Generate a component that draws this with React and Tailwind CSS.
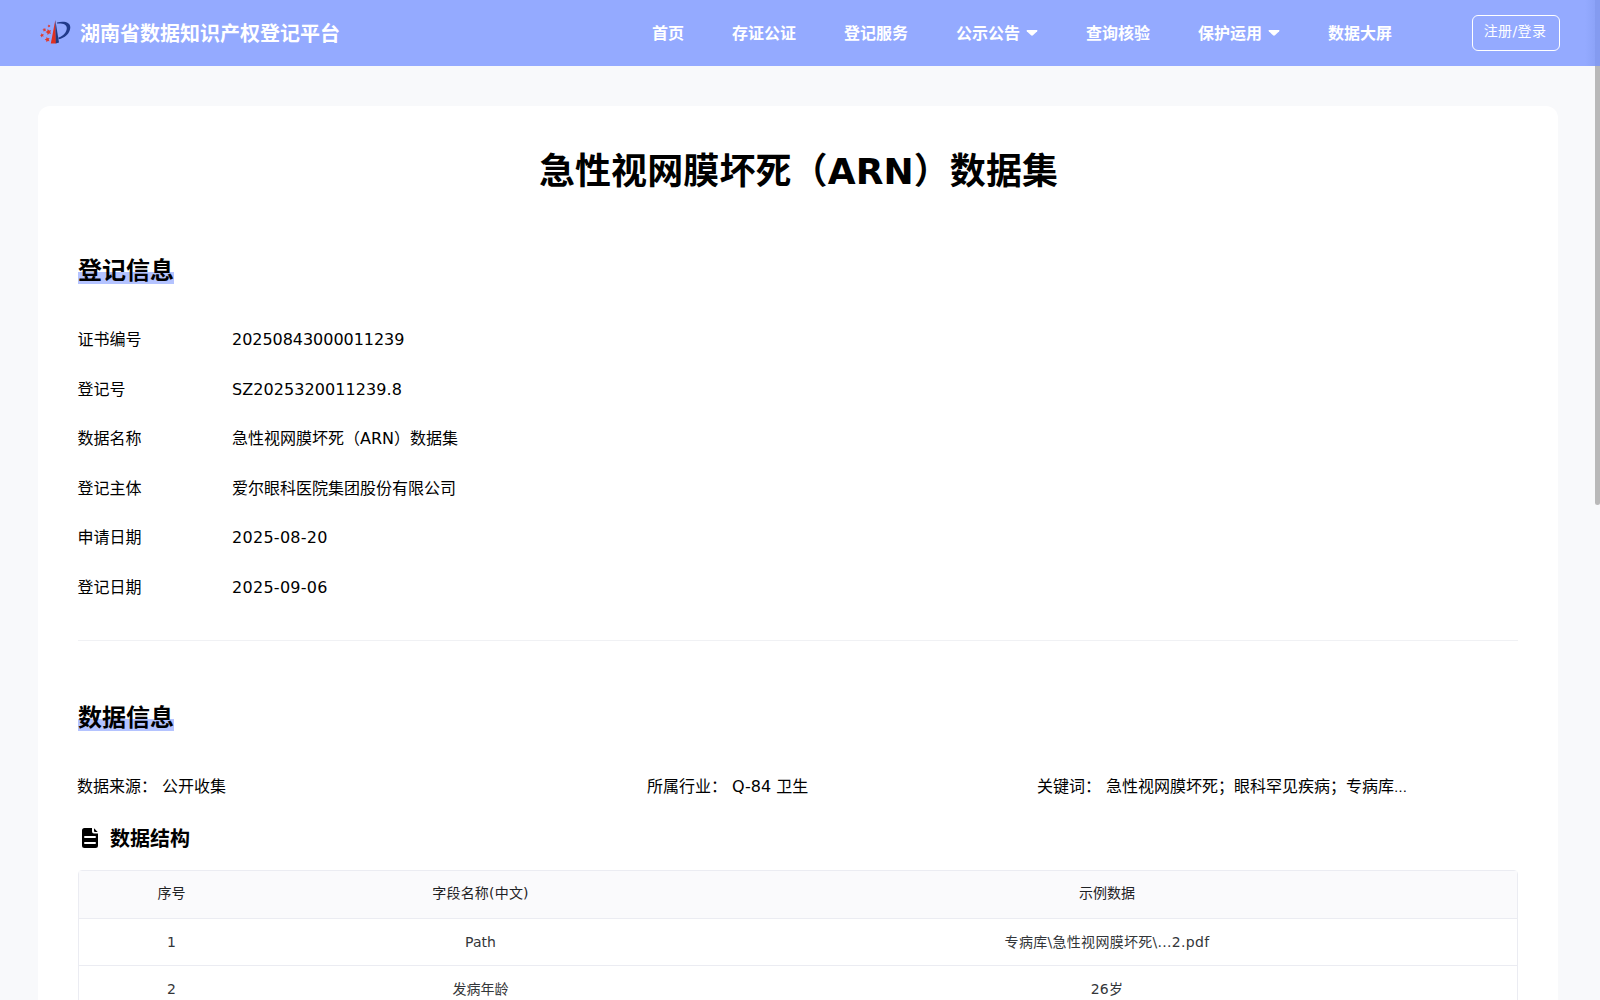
const NAV = [
  { label: "首页" },
  { label: "存证公证" },
  { label: "登记服务" },
  { label: "公示公告", menu: true },
  { label: "查询核验" },
  { label: "保护运用", menu: true },
  { label: "数据大屏" },
];

const INFO = [
  ["证书编号", "20250843000011239", "tracking-[-0.04px]"],
  ["登记号", "SZ2025320011239.8", "tracking-[0.07px]"],
  ["数据名称", "急性视网膜坏死（ARN）数据集", ""],
  ["登记主体", "爱尔眼科医院集团股份有限公司", ""],
  ["申请日期", "2025-08-20", "tracking-[0.28px]"],
  ["登记日期", "2025-09-06", "tracking-[0.28px]"],
];

const ROWS = [
  ["1", "Path", "专病库\\急性视网膜坏死\\...2.pdf"],
  ["2", "发病年龄", "26岁"],
];

function Star({ x, y, r }) {
  const pts = Array.from({ length: 10 }, (_, i) => {
    const a = (Math.PI / 5) * i - Math.PI / 2 - 0.3;
    const d = i % 2 ? r * 0.5 : r;
    return `${x + d * Math.cos(a)},${y + d * Math.sin(a)}`;
  });
  return <polygon points={pts.join(" ")} fill="#e03a2e" />;
}

function Logo() {
  return (
    <svg width="32" height="24" viewBox="0 0 32 24" className="-mt-0.5 shrink-0">
      <path d="M15.3 0 L16 23.5 H10.8 Z" fill="#df3020" />
      <path d="M15.3 0 L19 22.6 L15.8 23.5 Z" fill="#213a82" />
      <path
        d="M17 2.6 C24 0.6 30.6 2.3 30.3 7.8 C30 13.5 24.5 18.3 18.6 19.3 L18.4 17.6 C23.3 16 26.8 12.3 26.8 8 C26.8 4.4 22.8 3.2 17 3.6 Z"
        fill="#213a8a"
      />
      <Star x={9} y={6} r={1.6} />
      <Star x={4.4} y={9.8} r={2} />
      <Star x={8.6} y={12} r={3.1} />
      <Star x={2} y={15.3} r={2.2} />
      <Star x={7.4} y={19.6} r={2.7} />
    </svg>
  );
}

function Caret() {
  return (
    <svg width="12" height="8" viewBox="0 0 12 8" className="-mt-0.5">
      <path d="M1.2 1 H10.8 Q12 1.2 11.2 2.3 L7 6.3 Q6 7.1 5 6.3 L0.8 2.3 Q0 1.2 1.2 1 Z" fill="#fff" />
    </svg>
  );
}

function DocIcon() {
  return (
    <svg width="16" height="20" viewBox="0 0 16 20">
      <path d="M2.5 0 H10 V3.5 Q10 5.5 12 5.5 H16 V17.5 Q16 20 13.5 20 H2.5 Q0 20 0 17.5 V2.5 Q0 0 2.5 0 Z" fill="#000" />
      <path d="M12 0.3 L15.7 4 H13 Q12 4 12 3 Z" fill="#000" />
      <path d="M3 9 H13 M3 15 H13" stroke="#fff" strokeWidth="2" strokeLinecap="round" />
    </svg>
  );
}

function SectionTitle({ children }) {
  return (
    <h2 className="h-7 w-24 bg-[linear-gradient(#b4c3ff,#b4c3ff)] bg-[length:100%_12px] bg-bottom bg-no-repeat text-2xl/[30px] font-bold">
      {children}
    </h2>
  );
}

export default function App() {
  return (
    <div className="relative flex h-[1000px] w-[1600px] flex-col overflow-hidden bg-[#f8f9fb] font-['DejaVu_Sans','Noto_Sans_CJK_SC',sans-serif] text-black">
      <header className="flex h-[66px] shrink-0 items-center bg-[#94aaff] pr-10 pl-10 text-white">
        <Logo />
        <span className="ml-2 w-[572px] pb-px font-['Noto_Sans_CJK_SC',sans-serif] text-xl font-bold">
          湖南省数据知识产权登记平台
        </span>
        <nav className="flex gap-12 pt-0.5 text-base font-bold">
          {NAV.map((n) => (
            <a key={n.label} className="flex items-center gap-1.5 whitespace-nowrap">
              {n.label}
              {n.menu && <Caret />}
            </a>
          ))}
        </nav>
        <button className="ml-auto h-9 w-[88px] rounded-md border border-white pr-0.5 pb-1 text-sm tracking-[0.4px] whitespace-nowrap">
          注册/登录
        </button>
      </header>

      <main className="mt-10 mr-[42px] ml-[38px] flex-1 rounded-t-xl bg-white px-10 pt-10">
        <h1 className="h-[52px] pl-px text-center text-4xl/[52px] font-bold tracking-[0.1px]">
          急性视网膜坏死（ARN）数据集
        </h1>

        <div className="mt-[58px]">
          <SectionTitle>登记信息</SectionTitle>
        </div>
        <dl className="-ml-[0.5px] mt-[43px] flex flex-col gap-6">
          {INFO.map(([k, v, tracking]) => (
            <div key={k} className="flex h-[25.6px] items-center text-base/[25.6px]">
              <dt className="w-[154.5px]">{k}</dt>
              <dd className={tracking}>{v}</dd>
            </div>
          ))}
        </dl>

        <div className="mt-[39px] h-px bg-[#f0f1f4]" />

        <div className="mt-[62px]">
          <SectionTitle>数据信息</SectionTitle>
        </div>
        <div className="-ml-px mt-[43px] flex h-[26px] text-base/[26px] whitespace-nowrap">
          <div className="flex w-[570px] gap-[5px]">
            <span>数据来源：</span>
            <span>公开收集</span>
          </div>
          <div className="flex w-[390px] gap-[5px]">
            <span>所属行业：</span>
            <span>Q-84 卫生</span>
          </div>
          <div className="flex gap-[5px]">
            <span>关键词：</span>
            <span>
              急性视网膜坏死；眼科罕见疾病；专病库<span className="text-[13px]">…</span>
            </span>
          </div>
        </div>

        <div className="mt-[24px] flex h-7 items-center gap-3 pl-1">
          <DocIcon />
          <h3 className="pt-0.5 text-xl/[28px] font-bold">数据结构</h3>
        </div>

        <div className="mt-[18px] rounded-t border border-[#ebecf2] text-center text-sm">
          <div className="grid h-12 grid-cols-[185px_433px_1fr] items-center border-b border-[#ebecf2] bg-[#fafafc] pb-[3px] text-[#1f2225]">
            <span>序号</span>
            <span className="tracking-[0.2px]">字段名称(中文)</span>
            <span>示例数据</span>
          </div>
          {ROWS.map(([no, field, sample]) => (
            <div key={no} className="grid h-[47px] grid-cols-[185px_433px_1fr] items-center border-b border-[#ebecf2] text-[#333639]">
              <span>{no}</span>
              <span>{field}</span>
              <span className="tracking-[0.3px]">{sample}</span>
            </div>
          ))}
        </div>
      </main>

      <div className="absolute top-0 right-0 h-[505px] w-[5px] rounded bg-[#b9b9b9]" />
      <div className="absolute top-0 right-0 h-[66px] w-[5px] bg-[#849bf0]" />
      <div className="absolute top-0 right-[5px] h-[66px] w-2.5 bg-gradient-to-r from-[#94aaff] to-[#8ca3f8]" />
    </div>
  );
}
